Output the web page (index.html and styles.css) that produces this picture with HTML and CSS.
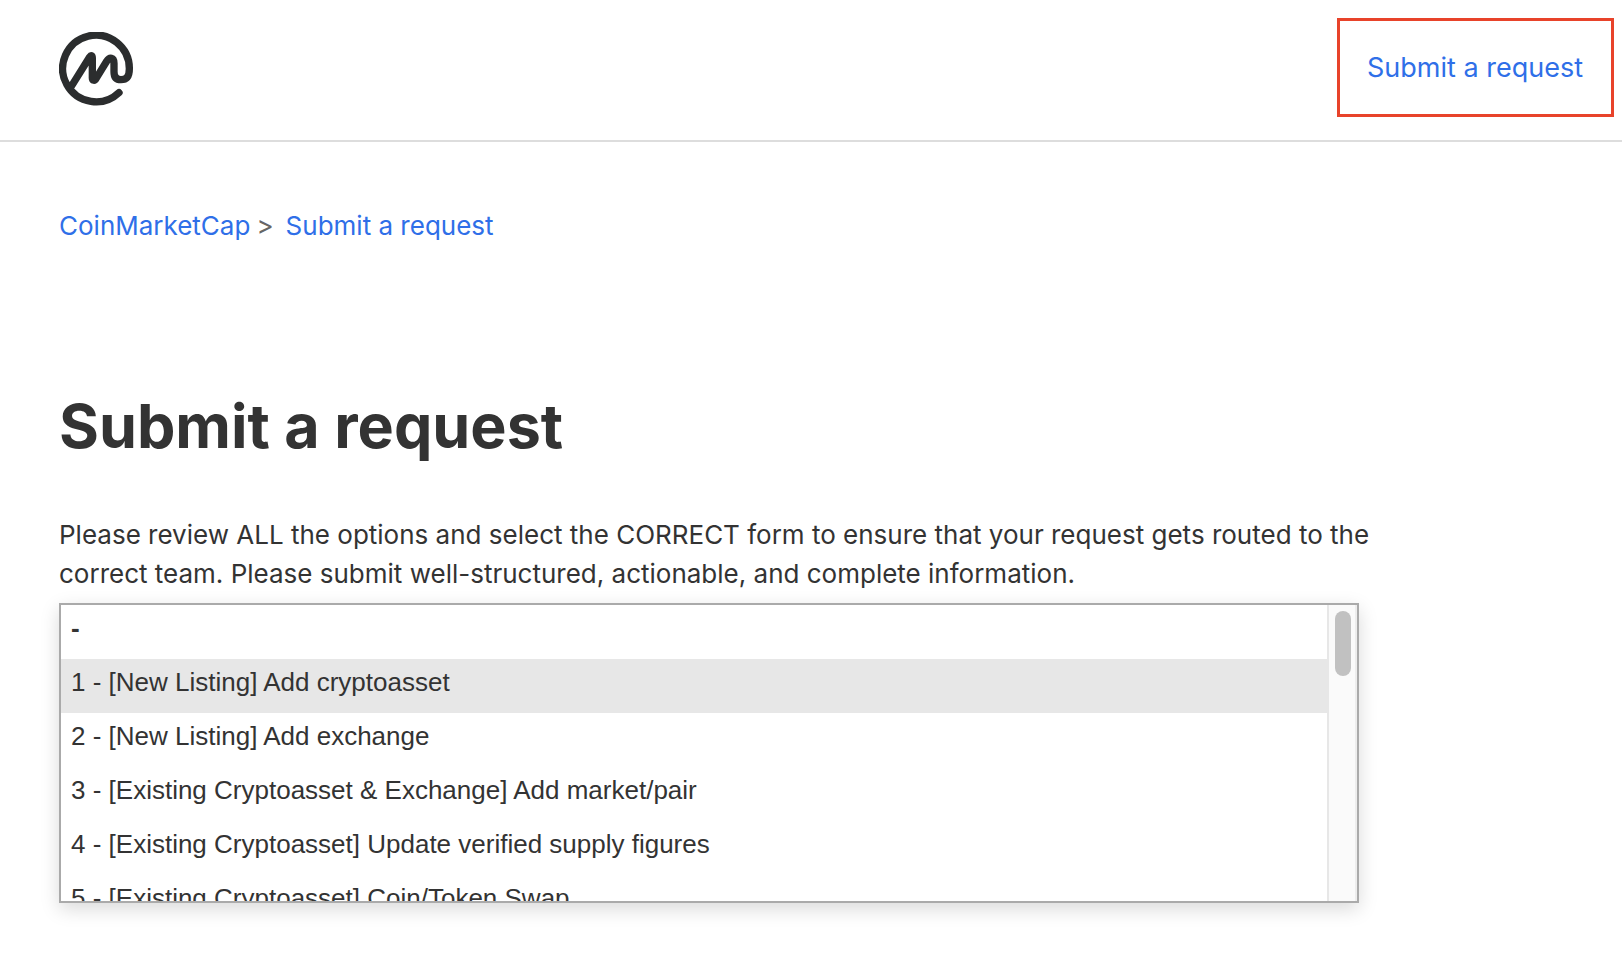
FILE: index.html
```
<!DOCTYPE html>
<html lang="en">
<head>
<meta charset="utf-8">
<title>Submit a request</title>
<link rel="stylesheet" href="styles.css">
</head>
<body>
<header class="header">
  <a class="logo" href="#" aria-label="CoinMarketCap">
    <svg class="logo-mark" viewBox="57 36 222 222" aria-hidden="true">
      <path d="M237 218 A100 100 0 1 1 268 147 C268 171 258 179 243 179 C228 179 222 170 222 155 V130 C222 112 209 110 200 124 L168 176 C164 183 157 182 157 174 V114 C157 106 153 105 149 111 L92 202"/>
    </svg>
  </a>
  <a class="submit-link" href="#">Submit a request</a>
</header>
<main class="main">
  <nav class="breadcrumbs" aria-label="Breadcrumb">
    <a href="#">CoinMarketCap</a>
    <span class="separator">&gt;</span>
    <a href="#">Submit a request</a>
  </nav>
  <h1 class="title">Submit a request</h1>
  <form class="form">
    <label class="label" for="request-type">Please review ALL the options and select the CORRECT form to ensure that your request gets routed to the correct team. Please submit well-structured, actionable, and complete information.</label>
    <div class="picker">
      <select class="options" id="request-type" size="6">
        <option class="option option-empty">-</option>
        <option class="option option-active">1 - [New Listing] Add cryptoasset</option>
        <option class="option">2 - [New Listing] Add exchange</option>
        <option class="option">3 - [Existing Cryptoasset &amp; Exchange] Add market/pair</option>
        <option class="option">4 - [Existing Cryptoasset] Update verified supply figures</option>
        <option class="option">5 - [Existing Cryptoasset] Coin/Token Swap</option>
      </select>
      <div class="scrollbar" aria-hidden="true"><div class="thumb"></div></div>
    </div>
  </form>
</main>
</body>
</html>
```
FILE: styles.css
```
* {
  box-sizing: border-box;
}

body {
  margin: 0;
  background: #fff;
  color: #333;
  font-family: Inter, "Liberation Sans", sans-serif;
  font-size: 26px;
  line-height: 39px;
}

a {
  color: #2f6fe8;
  text-decoration: none;
}

.header {
  display: flex;
  align-items: center;
  justify-content: space-between;
  padding: 18px 8px 23px 59px;
  border-bottom: 2px solid #ddd;
}

.logo {
  padding-top: 2px;
}

.logo-mark {
  display: block;
  width: 74px;
  height: 74px;
  fill: none;
  stroke: #2b2d2e;
  stroke-width: 22;
  stroke-linecap: round;
  stroke-linejoin: round;
}

.submit-link {
  padding: 27px 28px 27px 27px;
  border: 3px solid #e8432a;
  font-size: 27px;
}

.main {
  padding: 64px 59px;
}

.breadcrumbs {
  display: flex;
  gap: 6px;
}

.separator {
  margin-right: 6px;
  color: #666;
}

.title {
  margin: 141px 0 49px;
  font-size: 61px;
  font-weight: 700;
  line-height: 80px;
}

.label {
  display: block;
  max-width: 1320px;
}

.picker {
  display: flex;
  max-width: 1300px;
  margin: 10px 0 0;
  border: 2px solid #aaa;
  background: #fff;
  box-shadow: 0 6px 18px rgba(0, 0, 0, 0.15);
}

.options {
  flex: 1;
  min-width: 0;
  height: 296px;
  padding: 0;
  border: 0;
  outline: 0;
  overflow: hidden;
  background: #fff;
  color: #333;
  font: 26px "Liberation Sans", Arial, sans-serif;
}

.option {
  height: 54px;
  min-height: 54px;
  padding: 8px 10px 16px;
  line-height: 30px;
}

.option-empty {
  font-weight: 700;
}

.option-active {
  background: #e7e7e7;
}

.scrollbar {
  width: 30px;
  padding: 6px;
  border-right: 2px solid #ededed;
  border-left: 2px solid #e7e7e7;
  background: #fafafa;
}

.thumb {
  width: 16px;
  height: 65px;
  border-radius: 8px;
  background: #c1c1c1;
}
```
